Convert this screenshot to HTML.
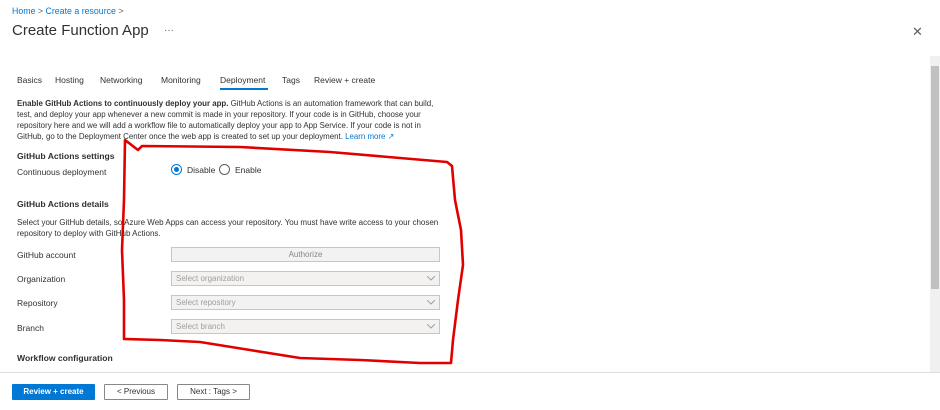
<!DOCTYPE html>
<html><head><style>
*{margin:0;padding:0;box-sizing:border-box}
body{width:940px;height:410px;background:#fff;font-family:"Liberation Sans",sans-serif;color:#323130;position:relative;overflow:hidden}
.a{position:absolute;white-space:nowrap}
.s{font-size:8.5px}
.lnk{color:#0078d4}
.h{font-size:8.6px;font-weight:bold;color:#323130}
.g{color:#605e5c}
.box{position:absolute;left:171px;width:269px;height:15px;background:#f3f2f1;border:1px solid #c8c6c4;font-size:8px;color:#a19f9d;padding:2px 4px}
.box svg{position:absolute;right:4px;top:4px}
.btn{position:absolute;top:384px;height:16px;font-size:8px;text-align:center;line-height:14px;border:1px solid #8a8886;color:#323130;border-radius:1px}
</style></head><body>
<div class="a s lnk" style="left:12px;top:6px;font-size:8.8px">Home <span style="color:#605e5c">&gt;</span> Create a resource <span style="color:#605e5c">&gt;</span></div>
<div class="a" style="left:12px;top:22px;font-size:15px;color:#323130">Create Function App</div>
<div class="a g" style="left:164px;top:25px;font-size:10px">···</div>
<div class="a" style="left:912px;top:24px;font-size:13px;color:#605e5c">✕</div>
<div class="a s" style="left:17px;top:75px;color:#323130">Basics</div>
<div class="a s" style="left:55px;top:75px">Hosting</div>
<div class="a s" style="left:100px;top:75px">Networking</div>
<div class="a s" style="left:161px;top:75px">Monitoring</div>
<div class="a s" style="left:220px;top:75px">Deployment</div>
<div style="position:absolute;left:220px;top:88px;width:48px;height:1.5px;background:#0078d4"></div>
<div class="a s" style="left:282px;top:75px">Tags</div>
<div class="a s" style="left:314px;top:75px">Review + create</div>
<div class="a" style="left:17px;top:98px;font-size:7.9px;line-height:11px;color:#323130"><b>Enable GitHub Actions to continuously deploy your app.</b> GitHub Actions is an automation framework that can build,<br>test, and deploy your app whenever a new commit is made in your repository. If your code is in GitHub, choose your<br>repository here and we will add a workflow file to automatically deploy your app to App Service. If your code is not in<br>GitHub, go to the Deployment Center once the web app is created to set up your deployment. <span class="lnk">Learn more ↗</span></div>
<div class="a h" style="left:17px;top:151px">GitHub Actions settings</div>
<div class="a s" style="left:17px;top:167px">Continuous deployment</div>
<div style="position:absolute;left:171px;top:164px;width:11px;height:11px;border:1px solid #0078d4;border-radius:50%"><div style="position:absolute;left:2px;top:2px;width:5px;height:5px;background:#0078d4;border-radius:50%"></div></div>
<div class="a s" style="left:187px;top:165px">Disable</div>
<div style="position:absolute;left:219px;top:164px;width:11px;height:11px;border:1px solid #605e5c;border-radius:50%"></div>
<div class="a s" style="left:235px;top:165px">Enable</div>
<div class="a h" style="left:17px;top:199px">GitHub Actions details</div>
<div class="a" style="left:17px;top:217px;font-size:8px;line-height:11px">Select your GitHub details, so Azure Web Apps can access your repository. You must have write access to your chosen<br>repository to deploy with GitHub Actions.</div>
<div class="a s" style="left:17px;top:250px">GitHub account</div>
<div class="box" style="top:247px;text-align:center;color:#8a8886">Authorize</div>
<div class="a s" style="left:17px;top:274px">Organization</div>
<div class="box" style="top:271px">Select organization<svg width="8" height="5"><path d="M0 0L4 4L8 0" fill="none" stroke="#a19f9d"/></svg></div>
<div class="a s" style="left:17px;top:298px">Repository</div>
<div class="box" style="top:295px">Select repository<svg width="8" height="5"><path d="M0 0L4 4L8 0" fill="none" stroke="#a19f9d"/></svg></div>
<div class="a s" style="left:17px;top:323px">Branch</div>
<div class="box" style="top:319px">Select branch<svg width="8" height="5"><path d="M0 0L4 4L8 0" fill="none" stroke="#a19f9d"/></svg></div>
<div class="a h" style="left:17px;top:353px">Workflow configuration</div>
<div style="position:absolute;left:930px;top:56px;width:10px;height:316px;background:#f0f0f0"></div>
<div style="position:absolute;left:931px;top:66px;width:8px;height:223px;background:#c1c1c1"></div>
<div style="position:absolute;left:0;top:372px;width:940px;height:1px;background:#e1dfdd"></div>
<div class="btn" style="left:12px;width:83px;background:#0078d4;border-color:#0078d4;color:#fff;font-weight:bold">Review + create</div>
<div class="btn" style="left:104px;width:64px">&lt; Previous</div>
<div class="btn" style="left:177px;width:73px">Next : Tags &gt;</div>
<svg style="position:absolute;left:0;top:0" width="940" height="410"><path d="M125,140 L138,150 L142,146 L240,147 L330,152 L400,158 L447,162 L452,166 L455,200 L461,230 L463,265 L458,300 L453,340 L451,363 L420,363 L360,360 L300,358 L250,350 L200,342 L160,340 L124,339 L124,300 L122,250 L124,200 Z" fill="none" stroke="#e00000" stroke-width="2.6" stroke-linejoin="round"/></svg>
</body></html>
